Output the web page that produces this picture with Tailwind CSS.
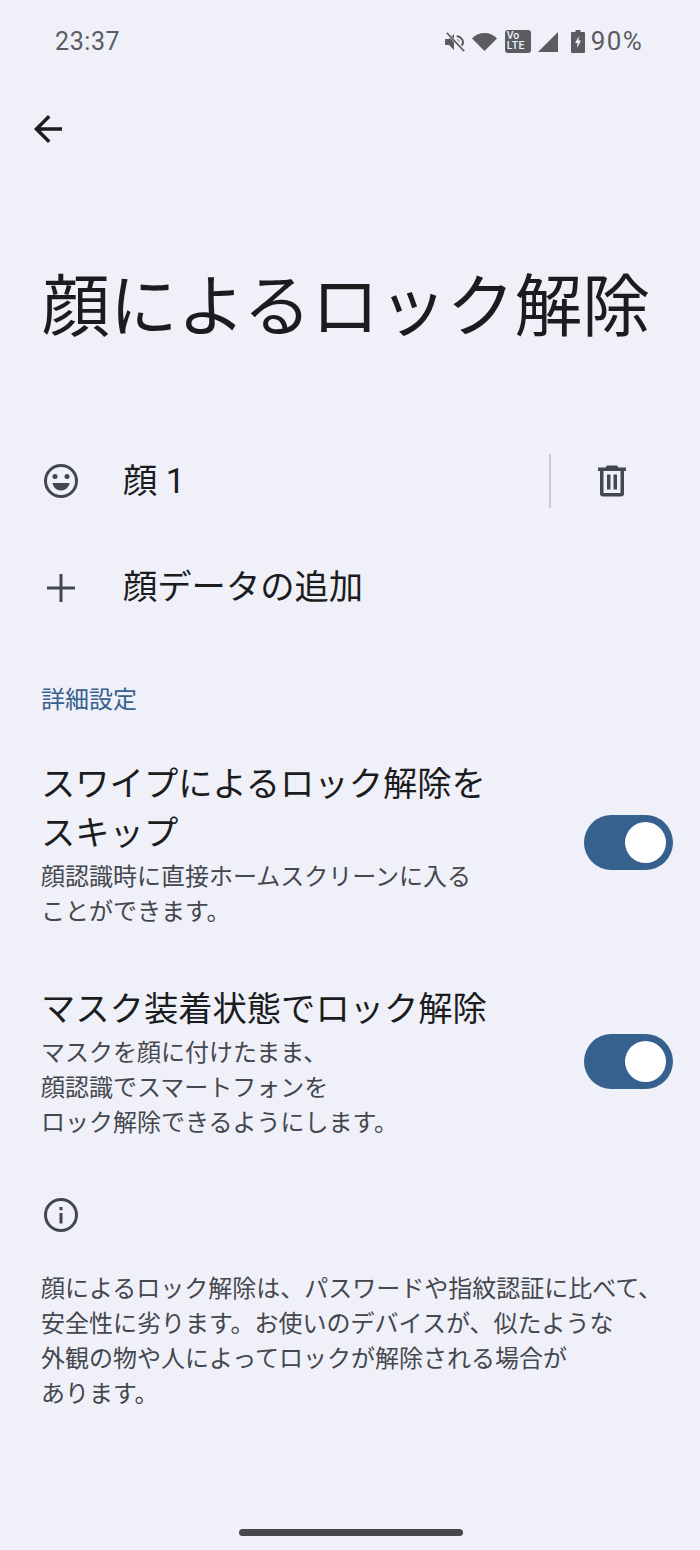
<!DOCTYPE html>
<html lang="ja">

<head>
    <meta charset="UTF-8">
    <title>顔によるロック解除</title>
    <script src="https://cdn.jsdelivr.net/npm/@tailwindcss/browser@4"></script>
</head>

<body class="w-[700px] h-[1550px] overflow-hidden bg-[#eff0f8] text-[#1a1c1e] font-['Roboto','Noto_Sans_CJK_JP',sans-serif]">
    <!-- status bar -->
    <div class="h-[82px] pl-[55px] pr-[57px] pt-[1px] flex items-center justify-between text-[#5a5c61] text-[25px]">
        <span class="tracking-[0.6px]">23:37</span>
        <div class="flex items-center">
            <svg class="w-[24px] h-[24px]" viewBox="0 0 24 24" fill="#5a5c61">
                <path d="M2 9v6h4l5 5V4L6 9z" />
                <path d="M14 5c4 1 7 4 7 7 0 1.500-.5 3-1.500 4.300l-1.500-1.500c.6-.9 1-1.800 1-2.800 0-2.300-2.300-4.300-5.500-5z" />
                <path d="M14 9c1.500.6 2.500 1.700 2.500 3l-2.500-2.500z" />
                <path d="M3 3.500 4.500 2 22 20.500 20.500 22z" stroke="#eff0f8" stroke-width=".6" />
            </svg>
            <svg class="w-[25px] h-[18px] ml-[5px]" viewBox="0 0 25 18" fill="#5a5c61">
                <path d="M12.500 18 0 5.500C3 2 7.500 0 12.500 0s9.500 2 12.500 5.500z" />
            </svg>
            <div class="w-[26px] h-[23px] ml-[8px] rounded-[3px] bg-[#5a5c61] text-[#eff0f8] text-[10.500px] leading-[10px] font-medium pl-[2px] pt-[1px]">
                <div>Vo</div>
                <div class="tracking-[0.5px]">LTE</div>
            </div>
            <svg class="w-[20px] h-[20px] ml-[7px]" viewBox="0 0 20 20" fill="#5a5c61">
                <path d="M20 0v20H0z" />
            </svg>
            <svg class="w-[14px] h-[23px] ml-[13px]" viewBox="0 0 14 23">
                <path fill="#5a5c61" d="M4.500 0h5v2H13a1 1 0 0 1 1 1v19a1 1 0 0 1-1 1H1a1 1 0 0 1-1-1V3a1 1 0 0 1 1-1h3.500z" />
                <path fill="#eff0f8" d="M8 6 4 13h2.500L6 18l4-7.500H7.500z" />
            </svg>
            <span class="ml-[6px] text-[26px] tracking-[1.300px]">90%</span>
        </div>
    </div>

    <!-- back arrow -->
    <div class="h-[94px] pl-[27px] flex items-center">
        <svg class="w-[42px] h-[42px]" viewBox="0 0 24 24" fill="#1a1c1e">
            <path d="M20 11H7.830l5.590-5.590L12 4l-8 8 8 8 1.410-1.410L7.830 13H20z" />
        </svg>
    </div>

    <h1 class="mt-[50px] h-[166px] pl-[42px] flex items-center text-[67.800px] font-normal whitespace-nowrap">顔によるロック解除</h1>

    <!-- face rows -->
    <div class="mt-[36px] h-[105px] pr-[25px] flex items-center">
        <div class="w-[123px] pl-[42px] shrink-0">
            <svg class="w-[38px] h-[38px]" viewBox="0 0 38 38">
                <circle cx="19" cy="19" r="15.500" fill="none" stroke="#44474e" stroke-width="3" />
                <circle cx="13" cy="14.500" r="2.500" fill="#44474e" />
                <circle cx="25" cy="14.500" r="2.500" fill="#44474e" />
                <path d="M10.500 21h17c-.6 4.500-4.200 7.500-8.500 7.500s-7.900-3-8.500-7.500z" fill="#44474e" />
            </svg>
        </div>
        <span class="flex-1 pt-[2px] text-[34.300px]">顔 1</span>
        <div class="w-[2px] h-[54px] bg-[#c9cacd]"></div>
        <div class="w-[124px] pl-[43px] shrink-0">
            <svg class="w-[36px] h-[36px]" viewBox="0 0 36 36" fill="#44474e">
                <path fill-rule="evenodd" d="M13 2.500h10L24.500 4.500H32V8h-2V30.500a3 3 0 0 1-3 3H9a3 3 0 0 1-3-3V8H4V4.500h7.500zM9.500 8V30h17V8z" />
                <path d="M13 11.500h3.500V26.500H13zM19.500 11.500H23V26.500h-3.500z" />
            </svg>
        </div>
    </div>
    <div class="mt-[2px] h-[106px] flex items-center">
        <div class="w-[123px] pl-[42px] shrink-0">
            <svg class="w-[38px] h-[38px]" viewBox="0 0 38 38" fill="#44474e">
                <path d="M17.500 5h3v12.500H33v3H20.500V33h-3V20.500H5v-3h12.500z" />
            </svg>
        </div>
        <span class="text-[34.300px]">顔データの追加</span>
    </div>

    <h2 class="mt-[42px] pl-[41px] text-[24px] leading-[35px] font-normal text-[#36618e]">詳細設定</h2>

    <!-- toggles -->
    <div class="mt-[42px] pl-[41px] pr-[27px] flex items-center justify-between">
        <div>
            <p class="text-[34.300px] leading-[49px]">スワイプによるロック解除を<br>スキップ</p>
            <p class="mt-[2px] text-[24px] leading-[35px] text-[#44474e]">顔認識時に直接ホームスクリーンに入る<br>ことができます。</p>
        </div>
        <div class="w-[89px] h-[55px] mb-[6px] rounded-full bg-[#36618e] flex items-center justify-end pr-[7px]">
            <div class="w-[41px] h-[41px] rounded-full bg-white"></div>
        </div>
    </div>
    <div class="mt-[55px] pl-[41px] pr-[27px] flex items-center justify-between">
        <div>
            <p class="text-[34.300px] leading-[49px]">マスク装着状態でロック解除</p>
            <p class="mt-[2px] text-[24px] leading-[35px] text-[#44474e]">マスクを顔に付けたまま、<br>顔認識でスマートフォンを<br>ロック解除できるようにします。</p>
        </div>
        <div class="w-[89px] h-[55px] mb-[4px] rounded-full bg-[#36618e] flex items-center justify-end pr-[7px]">
            <div class="w-[41px] h-[41px] rounded-full bg-white"></div>
        </div>
    </div>

    <!-- info -->
    <div class="mt-[55px] pl-[42px]">
        <svg class="w-[38px] h-[38px]" viewBox="0 0 38 38">
            <circle cx="19" cy="19" r="15.500" fill="none" stroke="#44474e" stroke-width="3" />
            <rect x="17.500" y="17" width="3" height="10.500" fill="#44474e" />
            <rect x="17.500" y="11" width="3" height="3.200" fill="#44474e" />
        </svg>
    </div>
    <p class="mt-[38px] pl-[41px] text-[24px] leading-[35px] text-[#44474e] whitespace-nowrap">顔によるロック解除は、パスワードや指紋認証に比べて、<br>安全性に劣ります。お使いのデバイスが、似たような<br>外観の物や人によってロックが解除される場合が<br>あります。</p>

    <!-- home pill -->
    <div class="mt-[117px] ml-[239px] w-[224px] h-[7px] rounded-full bg-[#46484c]"></div>
</body>

</html>
